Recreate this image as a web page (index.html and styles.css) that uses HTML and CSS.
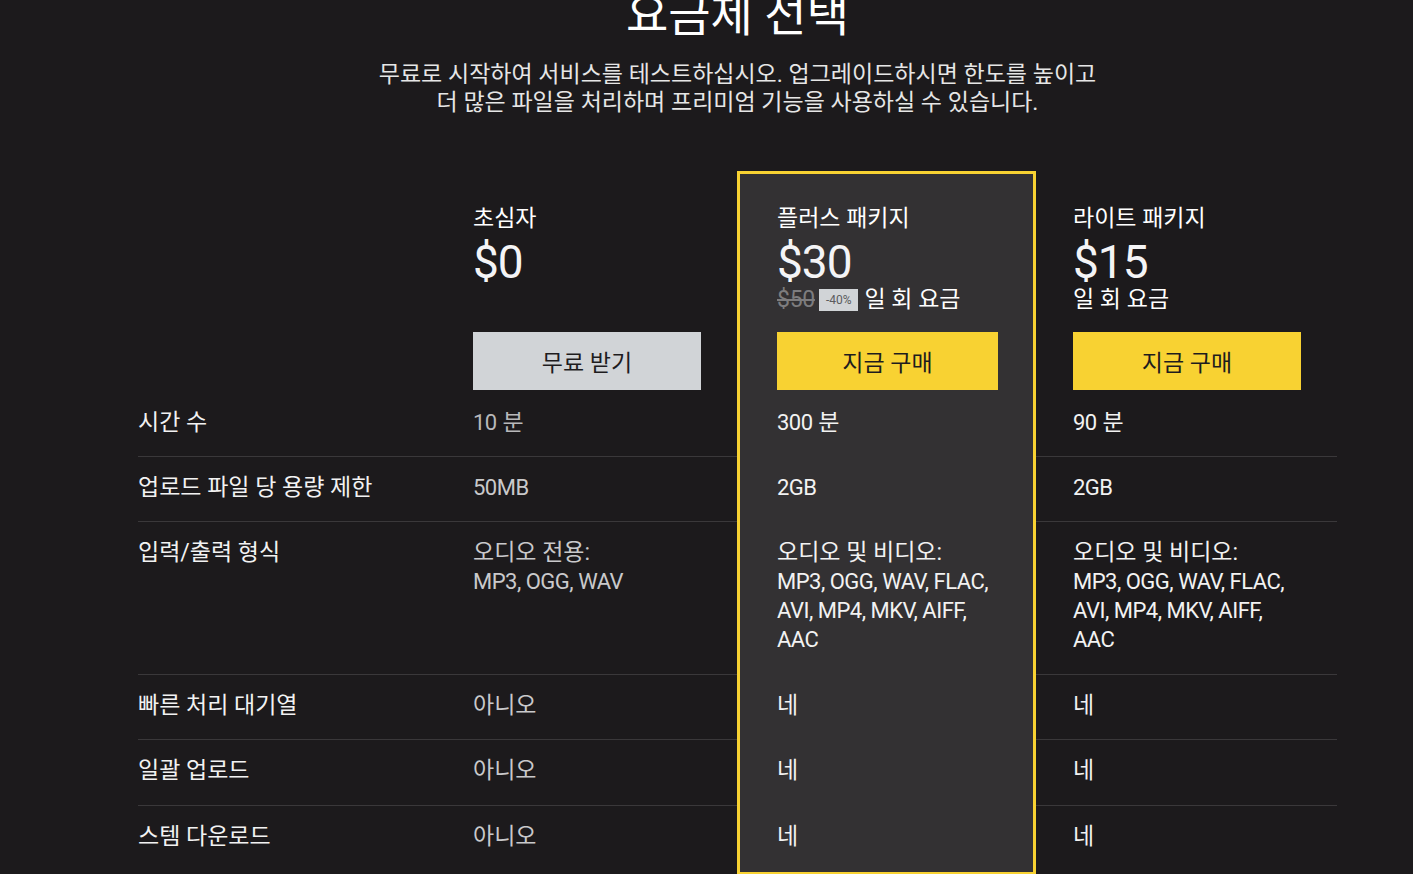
FILE: index.html
```html
<!DOCTYPE html>
<html lang="ko">
<head>
<meta charset="utf-8">
<title>요금제 선택</title>
<link rel="stylesheet" href="styles.css">
</head>
<body>
<main class="page">
  <header class="intro">
    <h1 class="title">요금제 선택</h1>
    <p class="lead">무료로 시작하여 서비스를 테스트하십시오. 업그레이드하시면 한도를 높이고<br>더 많은 파일을 처리하며 프리미엄 기능을 사용하실 수 있습니다.</p>
  </header>

  <section class="plans">
    <div class="col col-labels">
      <div class="head"></div>
      <div class="cell first">시간 수</div>
      <div class="cell">업로드 파일 당 용량 제한</div>
      <div class="cell tall">입력/출력 형식</div>
      <div class="cell">빠른 처리 대기열</div>
      <div class="cell fifth">일괄 업로드</div>
      <div class="cell last">스템 다운로드</div>
    </div>

    <div class="col col-plan col-free">
      <div class="head">
        <div class="plan-name">초심자</div>
        <div class="price">$0</div>
        <div class="price-note"></div>
        <button class="btn btn-gray">무료 받기</button>
      </div>
      <div class="cell first muted"><span class="en">10</span> 분</div>
      <div class="cell soft"><span class="en">50MB</span></div>
      <div class="cell tall soft">오디오 전용:<br><span class="en">MP3, OGG, WAV</span></div>
      <div class="cell soft">아니오</div>
      <div class="cell fifth soft">아니오</div>
      <div class="cell last soft">아니오</div>
    </div>

    <div class="col col-plan col-featured">
      <div class="head">
        <div class="plan-name">플러스 패키지</div>
        <div class="price">$30</div>
        <div class="price-note"><s class="old">$50</s><span class="badge">-40%</span><span>일 회 요금</span></div>
        <button class="btn btn-yellow">지금 구매</button>
      </div>
      <div class="cell first"><span class="en">300</span> 분</div>
      <div class="cell"><span class="en">2GB</span></div>
      <div class="cell tall">오디오 및 비디오:<br><span class="en">MP3, OGG, WAV, FLAC,<br>AVI, MP4, MKV, AIFF,<br>AAC</span></div>
      <div class="cell">네</div>
      <div class="cell fifth">네</div>
      <div class="cell last">네</div>
    </div>

    <div class="col col-plan col-lite">
      <div class="head">
        <div class="plan-name">라이트 패키지</div>
        <div class="price">$15</div>
        <div class="price-note"><span>일 회 요금</span></div>
        <button class="btn btn-yellow">지금 구매</button>
      </div>
      <div class="cell first"><span class="en">90</span> 분</div>
      <div class="cell"><span class="en">2GB</span></div>
      <div class="cell tall">오디오 및 비디오:<br><span class="en">MP3, OGG, WAV, FLAC,<br>AVI, MP4, MKV, AIFF,<br>AAC</span></div>
      <div class="cell">네</div>
      <div class="cell fifth">네</div>
      <div class="cell last">네</div>
    </div>
  </section>
</main>
</body>
</html>
```

FILE: styles.css
```css
* { box-sizing: border-box; }

html, body {
  margin: 0;
  padding: 0;
  background: #1c1a1c;
  overflow: hidden;
}

body {
  font-family: Roboto, "Noto Sans CJK KR", sans-serif;
  color: #f2f2f2;
}

.page {
  width: 1199px;
  margin-left: 138px;
}

.intro {
  text-align: center;
  margin-top: -13px;
}

.title {
  margin: 0;
  font-size: 46px;
  line-height: 56px;
  font-weight: 400;
  color: #ffffff;
}

.lead {
  margin: 18px 0 0;
  font-size: 23px;
  line-height: 28px;
  color: #e6e6e6;
}

.plans {
  display: flex;
  margin-top: 54px;
  align-items: flex-start;
}

.col {
  display: flex;
  flex-direction: column;
  font-size: 23px;
  line-height: 29px;
}

.col-labels { width: 299px; color: #f2f2f2; }
.col-free { width: 300px; }
.col-featured {
  width: 299px;
  background: #333133;
  border: 3px solid #f8d232;
}
.col-lite { width: 301px; }

.head {
  height: 220px;
  padding-top: 34px;
  display: flex;
  flex-direction: column;
}

.col-plan .head { padding-left: 36px; padding-right: 36px; }
.col-featured .head { height: 217px; padding-top: 31px; padding-left: 37px; padding-right: 35px; }
.col-lite .head { padding-left: 37px; padding-right: 36px; }

.plan-name {
  font-size: 23px;
  line-height: 28px;
  color: #ffffff;
}

.price {
  margin-top: 2px;
  font-size: 46px;
  line-height: 54px;
  font-weight: 400;
  letter-spacing: -1px;
  color: #f4f4f6;
}

.price-note {
  height: 22px;
  display: flex;
  align-items: center;
  gap: 4px;
  font-size: 23px;
  line-height: 22px;
  color: #ffffff;
}

.old {
  color: #7d7c7e;
  font-size: 23px;
  font-weight: 400;
  letter-spacing: -0.3px;
}

.badge {
  background: #d1d4d7;
  color: #5b5b5e;
  font-size: 12px;
  line-height: 22px;
  padding: 0 7px;
  margin-right: 2px;
}

.btn {
  margin-top: 21px;
  height: 58px;
  width: 100%;
  border: 0;
  border-radius: 0;
  font-family: inherit;
  font-size: 23px;
  color: #1e1c1e;
  cursor: pointer;
}

.btn-gray { background: #d1d4d7; }
.btn-yellow { background: #f8d232; }

.cell {
  height: 65px;
  padding-top: 16px;
  border-top: 1px solid #3a383a;
}

.en {
  font-size: 22px;
  letter-spacing: -0.5px;
}

.cell.first { border-top: 0; padding-top: 17px; }
.cell.tall { height: 153px; }
.cell.fifth { height: 66px; }
.cell.last { height: 66px; }

.col-plan .cell { padding-left: 36px; padding-right: 20px; }
.col-featured .cell { border-top-color: transparent; padding-left: 37px; }
.col-featured .cell.last { height: 67px; }
.col-lite .cell { padding-left: 37px; }

.muted { color: #b8b8ba; }
.soft { color: #c9c9cb; }
```
